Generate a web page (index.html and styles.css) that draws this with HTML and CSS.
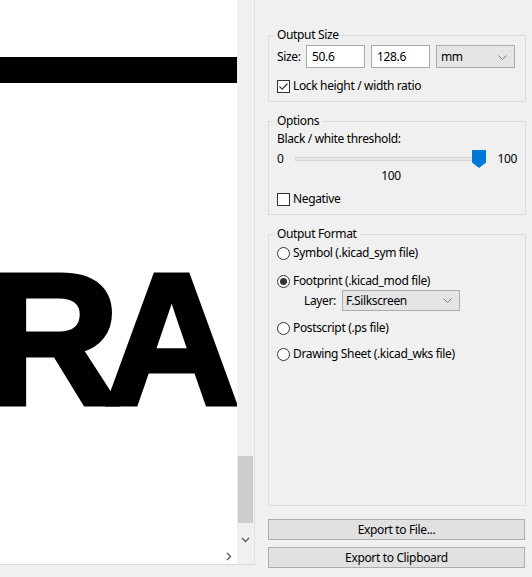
FILE: index.html
```html
<!DOCTYPE html>
<html>
<head>
<meta charset="utf-8">
<link rel="stylesheet" href="styles.css">
</head>
<body>
<div class="app">
  <div class="viewer">
    <div class="canvas">
      <div class="bar"></div>
      <div class="glyphs">RA</div>
    </div>
    <div class="vscroll">
      <div class="vtrack"><div class="vthumb"></div></div>
      <div class="arrow">
        <svg width="9" height="6" viewBox="0 0 9 6"><path d="M1 1 L4.5 4.5 L8 1" fill="none" stroke="#606060" stroke-width="1.4"/></svg>
      </div>
    </div>
    <div class="hscroll">
      <div class="htrack"></div>
      <div class="arrow">
        <svg width="6" height="9" viewBox="0 0 6 9"><path d="M1 1 L4.5 4.5 L1 8" fill="none" stroke="#606060" stroke-width="1.4"/></svg>
      </div>
    </div>
    <div class="corner"></div>
  </div>

  <div class="panel">
    <fieldset class="group">
      <legend>Output Size</legend>
      <div class="gbody">
        <div class="size-row">
          <span class="size-label">Size:</span>
          <div class="textbox">50.6</div>
          <div class="textbox">128.6</div>
          <div class="combo unit">
            <span>mm</span>
            <svg width="9" height="5" viewBox="0 0 9 5"><path d="M0.5 0.5 L4.5 4.5 L8.5 0.5" fill="none" stroke="#7a7a7a" stroke-width="1"/></svg>
          </div>
        </div>
        <div class="check-row first-check">
          <svg class="box" width="13" height="13" viewBox="0 0 13 13"><rect x="0.5" y="0.5" width="12" height="12" fill="#fff" stroke="#333"/><path d="M2.5 6.5 L5.2 9.2 L10.5 3.5" fill="none" stroke="#333" stroke-width="1.2"/></svg>
          <span>Lock height / width ratio</span>
        </div>
      </div>
    </fieldset>

    <fieldset class="group options">
      <legend>Options</legend>
      <div class="gbody">
        <div class="line threshold">Black / white threshold:</div>
        <div class="slider-row">
          <span class="smin">0</span>
          <div class="slider">
            <div class="track"></div>
            <svg class="thumb" width="14" height="18" viewBox="0 0 14 18"><path d="M0 0 H14 V12.5 L7 18 L0 12.5 Z" fill="#0078d7"/></svg>
          </div>
          <span class="smax">100</span>
        </div>
        <div class="line slider-value">100</div>
        <div class="check-row negative">
          <svg class="box" width="13" height="13" viewBox="0 0 13 13"><rect x="0.5" y="0.5" width="12" height="12" fill="#fff" stroke="#333"/></svg>
          <span>Negative</span>
        </div>
      </div>
    </fieldset>

    <fieldset class="group format">
      <legend>Output Format</legend>
      <div class="gbody">
        <div class="radio-row r-symbol">
          <svg class="radio" width="13" height="13" viewBox="0 0 13 13"><circle cx="6.5" cy="6.5" r="6" fill="#fff" stroke="#333"/></svg>
          <span>Symbol (.kicad_sym file)</span>
        </div>
        <div class="radio-row r-footprint">
          <svg class="radio" width="13" height="13" viewBox="0 0 13 13"><circle cx="6.5" cy="6.5" r="6" fill="#fff" stroke="#333"/><circle cx="6.5" cy="6.5" r="3.5" fill="#333"/></svg>
          <span>Footprint (.kicad_mod file)</span>
        </div>
        <div class="layer-row">
          <span class="layer-label">Layer:</span>
          <div class="combo layer">
            <span>F.Silkscreen</span>
            <svg width="9" height="5" viewBox="0 0 9 5"><path d="M0.5 0.5 L4.5 4.5 L8.5 0.5" fill="none" stroke="#7a7a7a" stroke-width="1"/></svg>
          </div>
        </div>
        <div class="radio-row r-ps">
          <svg class="radio" width="13" height="13" viewBox="0 0 13 13"><circle cx="6.5" cy="6.5" r="6" fill="#fff" stroke="#333"/></svg>
          <span>Postscript (.ps file)</span>
        </div>
        <div class="radio-row r-wks">
          <svg class="radio" width="13" height="13" viewBox="0 0 13 13"><circle cx="6.5" cy="6.5" r="6" fill="#fff" stroke="#333"/></svg>
          <span>Drawing Sheet (.kicad_wks file)</span>
        </div>
      </div>
    </fieldset>

    <div class="btn btn-file">Export to File...</div>
    <div class="btn btn-clip">Export to Clipboard</div>
  </div>
</div>
</body>
</html>
```

FILE: styles.css
```css
* { box-sizing: border-box; }
html, body { margin: 0; padding: 0; }
body {
  width: 532px;
  height: 577px;
  overflow: hidden;
  background: #f0f0f0;
  font-family: "Segoe UI", "Noto Sans", "Liberation Sans", sans-serif;
  font-size: 12px;
  letter-spacing: -0.35px;
  line-height: 16px;
  color: #000;
}
.app {
  display: flex;
  height: 577px;
}

/* ---- left viewer ---- */
.viewer {
  width: 255px;
  height: 565px;
  display: grid;
  grid-template-columns: 237px 17px;
  grid-template-rows: 548px 16px;
  border-right: 1px solid #e2e2e2;
  border-bottom: 1px solid #dadada;
  flex: none;
}
.canvas {
  background: #fff;
  position: relative;
  overflow: hidden;
}
.bar {
  position: absolute;
  left: 0;
  right: 0;
  top: 57px;
  height: 26px;
  background: #000;
}
.glyphs {
  position: absolute;
  left: -16px;
  top: 245px;
  font-family: "Liberation Sans", Arial, sans-serif;
  font-weight: bold;
  font-size: 188px;
  line-height: 188px;
  letter-spacing: -16px;
  color: #000;
  -webkit-text-stroke: 5px #000;
  white-space: nowrap;
}
.vscroll {
  background: #f0f0f0;
  display: flex;
  flex-direction: column;
}
.vtrack {
  flex: 1;
  padding-top: 456px;
}
.vthumb {
  width: 15px;
  height: 67px;
  background: #cdcdcd;
  margin-left: 1px;
}
.vscroll .arrow {
  height: 17px;
  display: flex;
  align-items: center;
  justify-content: center;
}
.hscroll {
  background: #fff;
  display: flex;
}
.htrack { flex: 1; }
.hscroll .arrow {
  width: 17px;
  display: flex;
  align-items: center;
  justify-content: center;
}
.corner { background: #f0f0f0; }

/* ---- right panel ---- */
.panel {
  flex: 1;
  display: flex;
  flex-direction: column;
  padding: 27px 6px 9px 13px;
}
.group {
  margin: 0;
  padding: 0 4px 7px 4px;
  border: 1px solid #dcdcdc;
  min-width: 0;
}
.group legend {
  padding: 0 3px 0 4px;
  line-height: 16px;
  height: 16px;
}
.gbody { padding: 0 4px; }

.size-row {
  display: flex;
  align-items: center;
  margin-top: 2px;
  height: 23px;
}
.size-label { width: 29px; }
.textbox {
  width: 59px;
  height: 23px;
  background: #fff;
  border: 1px solid #a9a9a9;
  padding: 0 5px;
  line-height: 21px;
  margin-right: 6px;
}
.combo {
  display: flex;
  align-items: center;
  justify-content: space-between;
  background: #e5e5e5;
  border: 1px solid #acacac;
}
.combo.unit {
  width: 79px;
  height: 23px;
  padding: 1px 7px 0 4px;
}
.check-row, .radio-row {
  display: flex;
  align-items: center;
  height: 16px;
}
.check-row .box, .radio-row .radio { flex: none; margin-right: 3px; }
.first-check { margin-top: 10px; }

.options { margin-top: 11px; padding-bottom: 7px; }
.threshold { margin-top: 2px; }
.slider-row {
  display: flex;
  align-items: center;
  margin-top: 3px;
  height: 18px;
}
.smin { width: 18px; }
.slider {
  flex: 1;
  position: relative;
  height: 18px;
  display: flex;
  align-items: center;
}
.track {
  width: 100%;
  height: 4px;
  background: #e7e7e7;
  border: 1px solid #d6d6d6;
}
.thumb {
  position: absolute;
  right: 0;
  top: 0;
}
.smax { margin-left: 11px; }
.slider-value {
  text-align: center;
  padding-left: 18px;
  padding-right: 30px;
}
.negative { margin-top: 7px; }

.format {
  margin-top: 11px;
  flex: 1;
}
.r-symbol { margin-top: 3px; }
.r-footprint { margin-top: 12px; }
.layer-row {
  display: flex;
  align-items: center;
  margin-top: 1px;
  padding-left: 27px;
  height: 21px;
}
.layer-label { width: 38px; }
.combo.layer {
  width: 118px;
  height: 21px;
  padding: 0 7px 0 3px;
}
.r-ps { margin-top: 9px; }
.r-wks { margin-top: 10px; }

.btn {
  height: 21px;
  margin-right: 1px;
  background: #e1e1e1;
  border: 1px solid #adadad;
  text-align: center;
  line-height: 19px;
}
.btn-file { margin-top: 13px; }
.btn-clip { margin-top: 7px; }
```
